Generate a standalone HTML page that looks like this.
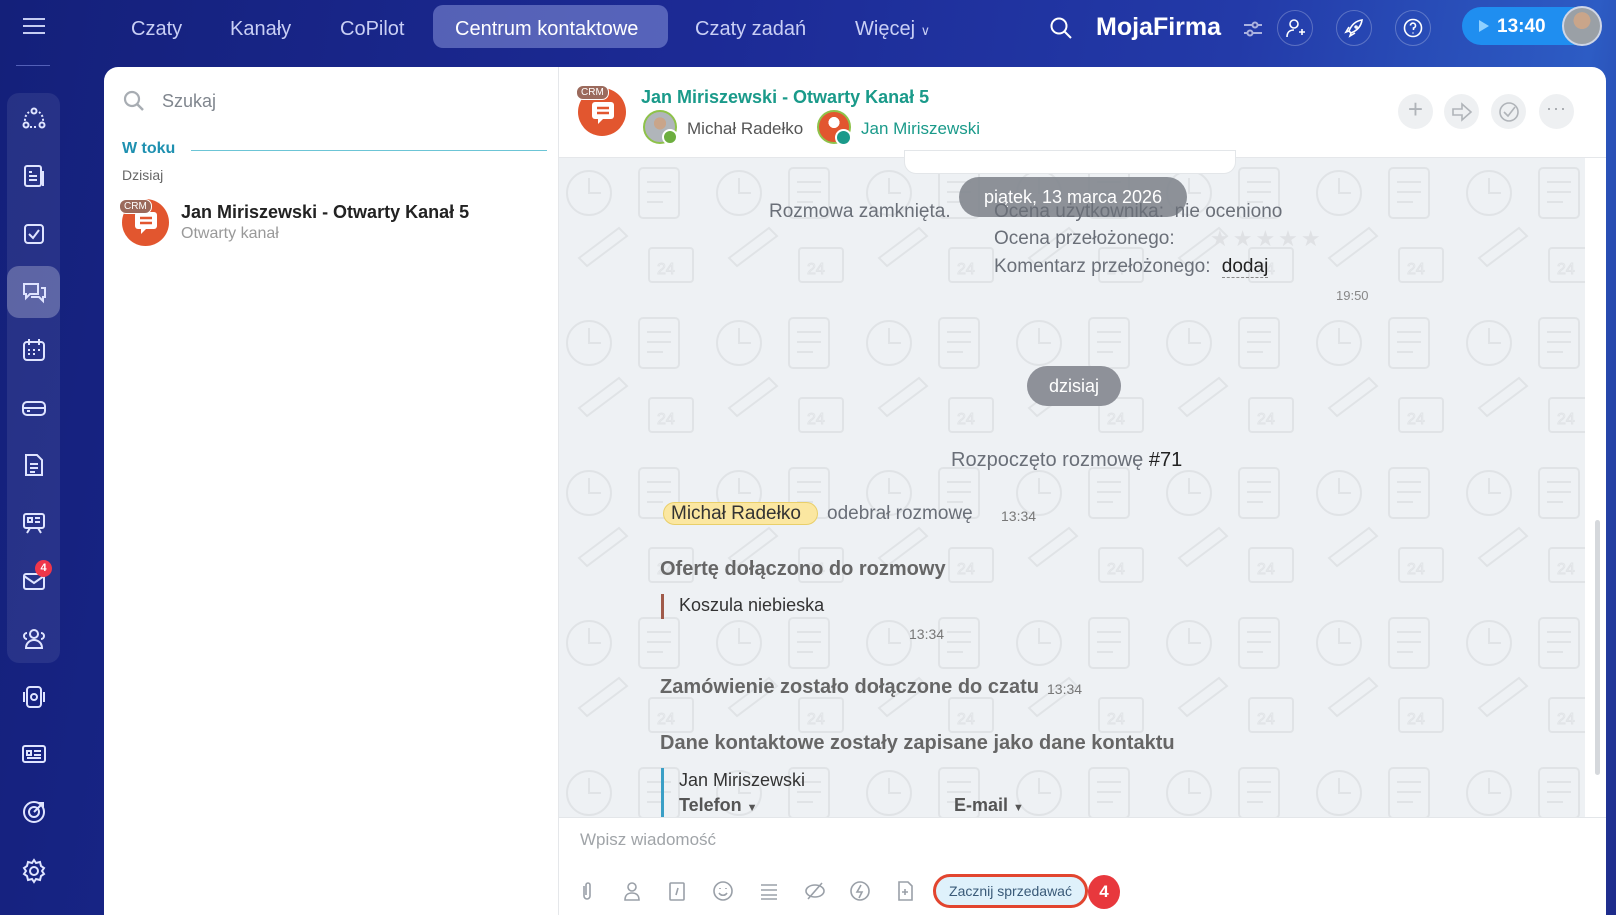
<!DOCTYPE html>
<html><head><meta charset="utf-8"><style>
*{box-sizing:border-box;margin:0;padding:0}
body{width:1616px;height:915px;overflow:hidden;font-family:"Liberation Sans",sans-serif;background:linear-gradient(100deg,#14207a 0%,#1c2a95 40%,#233aa8 70%,#2d5cc4 90%,#1e2b8a 100%);position:relative}
.a{position:absolute}
.nav{color:#c9cff5;font-size:20px;top:18px}
.side{left:21px;width:26px;height:26px;stroke:#dfe4ff;fill:none;stroke-width:2}
.hbtn{width:36px;height:36px;border-radius:50%;border:1px solid rgba(255,255,255,.25);top:10px}
.gray{color:#6a6f78}
.hb{width:35px;height:35px;border-radius:50%;background:#eef0f2;top:94px}
.ci{top:880px;width:22px;height:22px;stroke:#9aa0a8;fill:none;stroke-width:1.6}
</style></head><body>
<svg class="a" style="left:22px;top:16px" width="24" height="20"><path d="M1 3H23M1 10H23M1 17H23" stroke="#c5ccf2" stroke-width="2"/></svg>
<div class="a" style="left:16px;top:65px;width:34px;height:1px;background:#5360b8"></div>
<div class="a" style="left:7px;top:93px;width:53px;height:570px;border-radius:12px;background:rgba(255,255,255,.08)"></div>
<div class="a" style="left:7px;top:266px;width:53px;height:52px;border-radius:12px;background:rgba(255,255,255,.25)"></div>
<svg class="a side" style="top:106px" viewBox="0 0 26 26"><circle cx="13" cy="5" r="2.5"/><circle cx="5" cy="19" r="2.5"/><circle cx="21" cy="19" r="2.5"/><path d="M8 6A10 10 0 0 0 4 15M18 6a10 10 0 0 1 4 9M9 21h8" stroke-dasharray="2 2"/></svg>
<svg class="a side" style="top:163px" viewBox="0 0 26 26"><rect x="4" y="3" width="16" height="20" rx="2"/><path d="M8 9h3M8 13h8M8 17h8M22 8v15"/></svg>
<svg class="a side" style="top:221px" viewBox="0 0 26 26"><rect x="4" y="4" width="18" height="18" rx="3"/><path d="M8 13l4 4 6-8"/></svg>
<svg class="a side" style="top:279px" viewBox="0 0 26 26"><path d="M3 5h14v10H9l-4 4v-4H3zM10 18h8l4 4v-4h2V9h-4"/></svg>
<svg class="a side" style="top:337px" viewBox="0 0 26 26"><rect x="3" y="5" width="20" height="18" rx="3"/><path d="M8 2v6M18 2v6M7 13h2M12 13h2M17 13h2M7 17h2M12 17h2"/></svg>
<svg class="a side" style="top:395px" viewBox="0 0 26 26"><rect x="2" y="7" width="22" height="13" rx="4"/><path d="M2 13h22M6 16h3"/></svg>
<svg class="a side" style="top:452px" viewBox="0 0 26 26"><path d="M5 3h11l5 5v15H5zM9 12h8M9 16h8M9 20h5"/></svg>
<svg class="a side" style="top:510px" viewBox="0 0 26 26"><rect x="3" y="4" width="20" height="14" rx="2"/><path d="M7 8h4v4H7zM14 8h5M14 12h5M9 18l-3 5M17 18l3 5"/></svg>
<svg class="a side" style="top:568px" viewBox="0 0 26 26"><rect x="3" y="6" width="20" height="15" rx="2"/><path d="M3 8l10 7 10-7"/></svg>
<div class="a" style="left:35px;top:560px;width:17px;height:17px;border-radius:50%;background:#f0364a;color:#fff;font-size:11px;font-weight:bold;text-align:center;line-height:17px">4</div>
<svg class="a side" style="top:626px" viewBox="0 0 26 26"><circle cx="13" cy="8" r="4"/><path d="M5 22c0-5 4-8 8-8s8 3 8 8zM6 7a3 3 0 0 0 0 6M20 7a3 3 0 0 1 0 6"/></svg>
<svg class="a side" style="top:684px" viewBox="0 0 26 26"><rect x="6" y="3" width="14" height="20" rx="3"/><circle cx="13" cy="13" r="3"/><path d="M3 8v10M23 8v10"/></svg>
<svg class="a side" style="top:741px" viewBox="0 0 26 26"><rect x="2" y="5" width="22" height="16" rx="2"/><path d="M6 10h4v4H6zM13 10h7M13 14h7M6 17h14"/></svg>
<svg class="a side" style="top:799px" viewBox="0 0 26 26"><circle cx="13" cy="13" r="10"/><circle cx="13" cy="13" r="5"/><path d="M13 13l9-9M18 4h4v4"/></svg>
<svg class="a side" style="top:858px" viewBox="0 0 26 26"><circle cx="13" cy="13" r="4"/><path d="M13 2l2 3 4-1 1 4 3 2-2 3 2 3-3 2-1 4-4-1-2 3-2-3-4 1-1-4-3-2 2-3-2-3 3-2 1-4 4 1z"/></svg>
<div class="a nav" style="left:131px">Czaty</div>
<div class="a nav" style="left:230px">Kanały</div>
<div class="a nav" style="left:340px">CoPilot</div>
<div class="a" style="left:433px;top:5px;width:235px;height:43px;border-radius:10px;background:rgba(160,170,235,.45)"></div>
<div class="a nav" style="left:455px;color:#fff">Centrum kontaktowe</div>
<div class="a nav" style="left:695px">Czaty zadań</div>
<div class="a nav" style="left:855px">Więcej <span style="font-size:13px">∨</span></div>
<svg class="a" style="left:1049px;top:16px" width="24" height="24"><circle cx="10" cy="10" r="7.5" stroke="#fff" stroke-width="2" fill="none"/><path d="M15.5 15.5L22 22" stroke="#fff" stroke-width="2"/></svg>
<div class="a" style="left:1096px;top:13px;color:#fff;font-size:25px;font-weight:bold">MojaFirma</div>
<svg class="a" style="left:1243px;top:20px" width="20" height="18"><path d="M1 5h18M1 13h18" stroke="#aab2e0" stroke-width="2"/><circle cx="12" cy="5" r="2.5" fill="#2a3799" stroke="#aab2e0" stroke-width="2"/><circle cx="7" cy="13" r="2.5" fill="#2a3799" stroke="#aab2e0" stroke-width="2"/></svg>
<div class="a hbtn" style="left:1277px"></div>
<svg class="a" style="left:1284px;top:17px" width="22" height="22" fill="none" stroke="#fff" stroke-width="1.6"><circle cx="10" cy="7" r="4"/><path d="M3 20c0-5 3-7 7-7M15 15h6M18 12v6"/></svg>
<div class="a hbtn" style="left:1336px"></div>
<svg class="a" style="left:1344px;top:18px" width="20" height="20" fill="none" stroke="#fff" stroke-width="1.6"><path d="M18 2C11 3 7 8 5 13l2 2c5-2 10-6 11-13zM5 13l-3 1 3-5M7 15l-1 3 5-3M12 8a1 1 0 1 0 .1 0"/></svg>
<div class="a hbtn" style="left:1395px"></div>
<svg class="a" style="left:1403px;top:18px" width="20" height="20" fill="none" stroke="#fff" stroke-width="1.6"><circle cx="10" cy="10" r="8.5"/><path d="M7.5 7.5a2.5 2.5 0 1 1 3 2.5v2M10 14.5v1"/></svg>
<div class="a" style="left:1462px;top:7px;width:138px;height:38px;border-radius:19px;background:#1f8ef0"></div>
<svg class="a" style="left:1478px;top:19px" width="12" height="14"><path d="M1 1L11 7 1 13z" fill="#8fd0ff"/></svg>
<div class="a" style="left:1497px;top:16px;color:#fff;font-size:19px;font-weight:bold">13:40</div>
<div class="a" style="left:1562px;top:6px;width:40px;height:40px;border-radius:50%;background:radial-gradient(circle at 50% 35%,#c9a58a 0 28%,#9aa0a6 29% 100%);border:2px solid #cfd6e6"></div>
<div class="a" style="left:104px;top:67px;width:1502px;height:848px;background:#fff;border-radius:14px 14px 0 0"></div>
<svg class="a" style="left:122px;top:89px" width="24" height="24"><circle cx="10" cy="10" r="7" stroke="#a8adb3" stroke-width="2.2" fill="none"/><path d="M15 15l6 6" stroke="#a8adb3" stroke-width="2.5"/></svg>
<div class="a" style="left:162px;top:91px;font-size:18px;color:#80868e">Szukaj</div>
<div class="a" style="left:122px;top:140px;font-size:16px;color:#1e90b0;font-weight:bold">W toku</div>
<div class="a" style="left:191px;top:150px;width:356px;height:1px;background:#6cc5d6"></div>
<div class="a" style="left:122px;top:167px;font-size:14px;color:#666">Dzisiaj</div>
<div class="a" style="left:122px;top:199px;width:47px;height:47px;border-radius:50%;background:#e2562f"></div>
<svg class="a" style="left:133px;top:210px" width="26" height="26"><rect x="2" y="2" width="22" height="17" rx="3" fill="#fff"/><path d="M8 19v5l5-5" fill="#fff"/><path d="M7 8h12M7 13h12" stroke="#e2562f" stroke-width="2.5"/></svg>
<div class="a" style="left:119px;top:199px;background:#9b6a5c;color:#fff;font-size:10px;padding:1px 4px;border-radius:7px;border:1px solid #fff">CRM</div>
<div class="a" style="left:181px;top:202px;font-size:18px;color:#222;font-weight:bold">Jan Miriszewski - Otwarty Kanał 5</div>
<div class="a" style="left:181px;top:225px;font-size:16px;color:#999">Otwarty kanał</div>
<div class="a" style="left:558px;top:67px;width:1px;height:848px;background:#e5e7ea"></div>
<div class="a" style="left:578px;top:88px;width:48px;height:48px;border-radius:50%;background:#e2562f"></div>
<svg class="a" style="left:590px;top:100px" width="26" height="26"><rect x="2" y="2" width="22" height="17" rx="3" fill="#fff"/><path d="M8 19v5l5-5" fill="#fff"/><path d="M7 8h12M7 13h12" stroke="#e2562f" stroke-width="2.5"/></svg>
<div class="a" style="left:576px;top:85px;background:#9b6a5c;color:#fff;font-size:10px;padding:1px 4px;border-radius:7px;border:1px solid #fff">CRM</div>
<div class="a" style="left:641px;top:87px;font-size:18px;color:#1a9a8a;font-weight:bold">Jan Miriszewski - Otwarty Kanał 5</div>
<div class="a" style="left:643px;top:110px;width:34px;height:34px;border-radius:50%;background:radial-gradient(circle at 50% 38%,#c9a58a 0 25%,#b0b5ba 26%);border:2px solid #8ec24a"></div>
<div class="a" style="left:662px;top:129px;width:16px;height:16px;border-radius:50%;background:#6dae3f;border:2px solid #fff"></div>
<div class="a" style="left:687px;top:119px;font-size:17px;color:#555">Michał Radełko</div>
<div class="a" style="left:817px;top:110px;width:34px;height:34px;border-radius:50%;background:radial-gradient(circle at 50% 35%,#fff 0 22%,#e2562f 23%);border:2px solid #8ec24a"></div>
<div class="a" style="left:835px;top:129px;width:17px;height:17px;border-radius:50%;background:#1a9a8a;border:2px solid #fff"></div>
<div class="a" style="left:861px;top:119px;font-size:17px;color:#1a9a8a">Jan Miriszewski</div>
<div class="a hb" style="left:1398px"></div><div class="a" style="left:1405px;top:94px;font-size:26px;color:#b0b4b9;width:21px;text-align:center">+</div>
<div class="a hb" style="left:1444px"></div><svg class="a" style="left:1451px;top:102px" width="22" height="20"><path d="M2 7h9V2l9 8-9 8v-5H2z" fill="none" stroke="#b0b4b9" stroke-width="1.6"/></svg>
<div class="a hb" style="left:1491px"></div><svg class="a" style="left:1498px;top:101px" width="22" height="22"><circle cx="11" cy="11" r="9" fill="none" stroke="#b0b4b9" stroke-width="1.6"/><path d="M6 11l4 4 7-9" fill="none" stroke="#b0b4b9" stroke-width="1.6"/></svg>
<div class="a hb" style="left:1539px"></div><div class="a" style="left:1546px;top:98px;font-size:18px;color:#a0a4a9;letter-spacing:1px">···</div>
<div class="a" style="left:559px;top:157px;width:1047px;height:1px;background:#e5e7ea"></div>
<div class="a" style="left:559px;top:158px;width:1026px;height:659px;background:#eef1f4"></div>
<svg class="a" style="left:559px;top:158px" width="1026" height="659" opacity=".05">
<defs><pattern id="p" width="150" height="150" patternUnits="userSpaceOnUse"><g fill="none" stroke="#000" stroke-width="2"><circle cx="30" cy="35" r="22"/><path d="M30 20v15h12"/><rect x="80" y="10" width="40" height="50" rx="4"/><path d="M88 24h24M88 34h24M88 44h16"/><path d="M20 100l40-30 8 8-40 30z"/><rect x="90" y="90" width="44" height="34" rx="3"/><text x="98" y="116" font-size="16" stroke-width="1">24</text></g></pattern></defs>
<rect width="1026" height="659" fill="url(#p)"/></svg>
<div class="a" style="left:1595px;top:520px;width:5px;height:255px;border-radius:3px;background:#d5d8dc"></div>
<div class="a" style="left:904px;top:150px;width:332px;height:24px;background:#fff;border-radius:0 0 12px 12px;border:1px solid #e3e6e9"></div>
<div class="a" style="left:959px;top:177px;width:228px;height:40px;border-radius:20px;background:rgba(130,134,142,.9)"></div>
<div class="a" style="left:959px;top:187px;width:228px;text-align:center;color:#fff;font-size:18px">piątek, 13 marca 2026</div>
<div class="a gray" style="left:769px;top:201px;font-size:19px">Rozmowa zamknięta.</div>
<div class="a gray" style="left:994px;top:201px;font-size:19px">Ocena użytkownika:&nbsp; nie oceniono</div>
<div class="a gray" style="left:994px;top:228px;font-size:19px">Ocena przełożonego:</div>
<div class="a" style="left:1210px;top:226px;font-size:22px;color:#dfe1e4;letter-spacing:3px">★★★★★</div>
<div class="a gray" style="left:994px;top:256px;font-size:19px">Komentarz przełożonego: <span style="color:#222;border-bottom:1px dashed #888;margin-left:6px">dodaj</span></div>
<div class="a" style="left:1336px;top:288px;font-size:13px;color:#888">19:50</div>
<div class="a" style="left:1027px;top:366px;width:94px;height:40px;border-radius:20px;background:#8e9199;color:#fff;font-size:18px;text-align:center;line-height:40px">dzisiaj</div>
<div class="a gray" style="left:951px;top:449px;font-size:20px">Rozpoczęto rozmowę <span style="color:#222">#71</span></div>
<div class="a" style="left:663px;top:502px;width:155px;height:23px;border-radius:12px;background:#fbe7a1;border:1px solid #e9cf6a"></div>
<div class="a" style="left:671px;top:503px;font-size:19px;color:#333">Michał Radełko</div>
<div class="a gray" style="left:827px;top:503px;font-size:19px">odebrał rozmowę</div>
<div class="a" style="left:1001px;top:508px;font-size:14px;color:#777">13:34</div>
<div class="a" style="left:660px;top:558px;font-size:20px;color:#666;font-weight:bold">Ofertę dołączono do rozmowy</div>
<div class="a" style="left:661px;top:594px;width:3px;height:25px;background:#a05a4a"></div>
<div class="a" style="left:679px;top:595px;font-size:18px;color:#333">Koszula niebieska</div>
<div class="a" style="left:909px;top:626px;font-size:14px;color:#777">13:34</div>
<div class="a" style="left:660px;top:676px;font-size:20px;color:#666;font-weight:bold">Zamówienie zostało dołączone do czatu</div>
<div class="a" style="left:1047px;top:681px;font-size:14px;color:#777">13:34</div>
<div class="a" style="left:660px;top:732px;font-size:20px;color:#666;font-weight:bold">Dane kontaktowe zostały zapisane jako dane kontaktu</div>
<div class="a" style="left:661px;top:768px;width:3px;height:49px;background:#3a9fc6"></div>
<div class="a" style="left:679px;top:770px;font-size:18px;color:#333">Jan Miriszewski</div>
<div class="a" style="left:679px;top:795px;font-size:18px;color:#555;font-weight:bold">Telefon <span style="font-size:11px">▼</span></div>
<div class="a" style="left:954px;top:795px;font-size:18px;color:#555;font-weight:bold">E-mail <span style="font-size:11px">▼</span></div>
<div class="a" style="left:559px;top:817px;width:1047px;height:98px;background:#fff;border-top:1px solid #e3e6e9"></div>
<div class="a" style="left:580px;top:830px;font-size:17px;color:#a0a4a8">Wpisz wiadomość</div>
<svg class="a ci" style="left:576px" viewBox="0 0 22 22"><path d="M8 6v10a3 3 0 0 0 6 0V5a2 2 0 0 0-4 0v10"/></svg>
<svg class="a ci" style="left:621px" viewBox="0 0 22 22"><circle cx="11" cy="7" r="4"/><path d="M4 20c0-5 3-7 7-7s7 2 7 7z"/></svg>
<svg class="a ci" style="left:666px" viewBox="0 0 22 22"><rect x="4" y="3" width="14" height="17" rx="1"/><path d="M12 8l-2 7"/></svg>
<svg class="a ci" style="left:712px" viewBox="0 0 22 22"><circle cx="11" cy="11" r="9"/><path d="M7 13c2 3 6 3 8 0M8 8v1M14 8v1"/></svg>
<svg class="a ci" style="left:758px" viewBox="0 0 22 22"><path d="M3 5h16M3 10h16M3 15h16M3 19h16"/></svg>
<svg class="a ci" style="left:804px" viewBox="0 0 22 22"><ellipse cx="11" cy="11" rx="9" ry="6"/><path d="M4 19L18 3"/></svg>
<svg class="a ci" style="left:849px" viewBox="0 0 22 22"><circle cx="11" cy="11" r="9"/><path d="M12 5l-4 7h5l-3 6"/></svg>
<svg class="a ci" style="left:894px" viewBox="0 0 22 22"><path d="M5 2h9l4 4v14H5zM11 9v6M8 12h6"/></svg>
<div class="a" style="left:933px;top:874px;width:155px;height:34px;border-radius:17px;background:#dff1fb;border:3px solid #e2452f"></div>
<div class="a" style="left:933px;top:883px;width:155px;text-align:center;font-size:14px;color:#3a5a78">Zacznij sprzedawać</div>
<div class="a" style="left:1088px;top:875px;width:32px;height:34px;border-radius:50%;background:#e8383d;color:#fff;font-weight:bold;font-size:17px;text-align:center;line-height:34px">4</div>
</body></html>
